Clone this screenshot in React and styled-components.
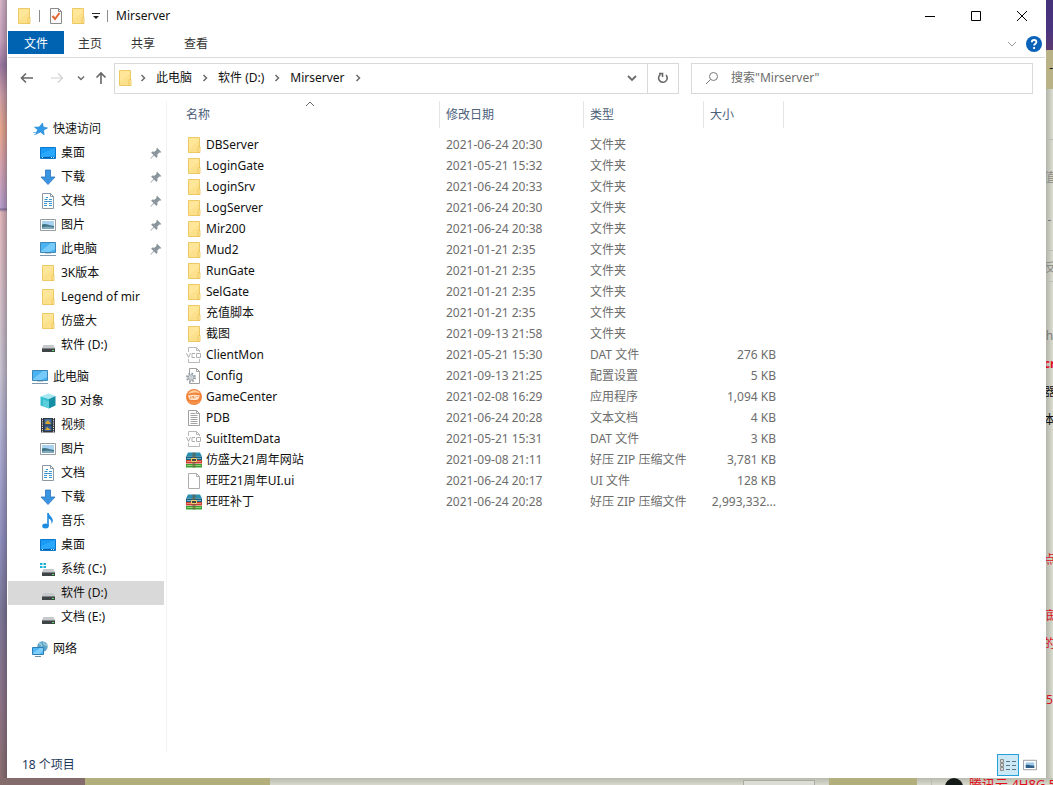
import React from 'react';
import styled, { createGlobalStyle } from 'styled-components';

const GlobalStyle = createGlobalStyle`
    * {
        box-sizing: border-box;
    }

    body {
        margin: 0;
        font-family: "Noto Sans", "Noto Sans CJK SC", sans-serif;
        font-size: 12px;
        line-height: 16px;
        color: #111;
    }

    button, input {
        font: inherit;
        color: inherit;
    }

    svg {
        display: block;
        flex: none;
    }
`;

/* ---------- desktop ---------- */

const Desktop = styled.div`
    display: grid;
    grid-template-columns: 7px minmax(0, 1fr) 7px;
    grid-template-rows: 1fr 7px;
    min-height: 100vh;
    overflow: hidden;
    background: #d6d7cb;
`;

const Wallpaper = styled.div`
    background:
        linear-gradient(90deg, transparent, rgba(60, 50, 70, 0.35)),
        linear-gradient(#d9b9cb 0, #c9a3bd 40px, #9a78a0 65px, #d0a0a8 95px, #eba98c 130px,
            #d9a5b0 165px, #b9a0cf 208px, #7d6c96 209px, #e3b9bd 212px, #d8c0c8 290px,
            #c9c5d2 370px, #b0b0d4 440px, #8f90c0 540px, #7c7898 610px, #8d7488 700px, #8c7070 778px);
`;

const PageEdge = styled.div`
    display: flex;
    flex-direction: column;
    overflow: hidden;
    background: linear-gradient(90deg, #b3b4aa, #dcddd1);
`;

const EdgeBand = styled.div`
    flex: none;
    height: ${props => props.$height};
    background: ${props => props.$fill};
    text-align: right;
    line-height: 36px;
    overflow: hidden;
`;

const EdgeRule = styled.div`
    flex: none;
    height: 1px;
    margin-top: ${props => props.$gap};
    background: #bbbcb3;
`;

const EdgeText = styled.div`
    display: flex;
    flex: none;
    justify-content: center;
    height: 16px;
    margin-top: ${props => props.$gap};
    color: ${props => props.$color};
    font-weight: ${props => props.$bold ? '700' : '400'};
    white-space: nowrap;
`;

const PageBottom = styled.div`
    grid-column: 1 / -1;
    display: flex;
    overflow: hidden;
    background: linear-gradient(#b9baaf, #d9dacd);
`;

const BottomPiece = styled.div`
    flex: none;
    width: ${props => props.$width};
    margin-right: ${props => props.$after || '0'};
    background: ${props => props.$fill};
`;

const BottomBox = styled.div`
    flex: none;
    width: 72px;
    height: 12px;
    margin: 2px 14px 0 auto;
    border: 1px solid #a9aaa2;
    background: #dcddd5;
`;

const Avatar = styled.div`
    flex: none;
    width: 18px;
    height: 18px;
    margin-right: 6px;
    border-radius: 9px;
    background: #141a17;
`;

const BottomText = styled.div`
    flex: none;
    width: 84px;
    overflow: hidden;
    color: #e00f1c;
    font-size: 13px;
    line-height: 12px;
    white-space: nowrap;
`;

/* ---------- window frame ---------- */

const Window = styled.main`
    display: flex;
    flex-direction: column;
    padding: 0 1px;
    background: #fff;
`;

const TitleBar = styled.header`
    display: flex;
    align-items: center;
    gap: 6px;
    height: 31px;
    padding-left: 8px;
`;

const Divider = styled.span`
    width: 1px;
    height: 12px;
    margin: 0 2px 0 1px;
    background: #8c8c8c;
`;

const Title = styled.h1`
    flex: 1;
    margin: 0;
    font-size: 12px;
    font-weight: 400;
`;

const PlainButton = styled.button`
    display: flex;
    align-items: center;
    justify-content: center;
    width: ${props => props.$width};
    height: ${props => props.$height || '31px'};
    padding: 0;
    border: 0;
    background: transparent;
`;

const WindowButtons = styled.div`
    display: flex;
`;

const Ribbon = styled.nav`
    display: flex;
    gap: 1px;
    height: 27px;
    border-bottom: 1px solid #dadbdc;
`;

const Tab = styled.button`
    height: 23px;
    padding: 2px ${props => props.$file ? '16px' : '14px'} 0;
    margin-right: ${props => props.$file ? '-1px' : '0'};
    border: 0;
    background: ${props => props.$file ? '#0063b1' : 'transparent'};
    color: ${props => props.$file ? '#fff' : '#333'};
`;

const RibbonEnd = styled.div`
    display: flex;
    align-items: center;
    gap: 4px;
    margin-left: auto;
    padding-right: 3px;
`;

const AddressRow = styled.div`
    display: flex;
    align-items: center;
    height: 40px;
    padding: 0 12px 0 4px;
`;

const AddressBox = styled.div`
    display: flex;
    align-items: center;
    flex: 1;
    height: 31px;
    margin: 0 12px 0 2px;
    padding-left: 2px;
    border: 1px solid #d9d9d9;
`;

const Crumb = styled.a`
    padding: 0 3px;
    color: #111;
    text-decoration: none;
    white-space: nowrap;
`;

const Separator = styled.span`
    display: flex;
    justify-content: center;
    width: 20px;
`;

const AddressTools = styled.div`
    display: flex;
    height: 29px;
    margin-left: auto;

    button + button {
        border-left: 1px solid #d9d9d9;
    }
`;

const SearchBox = styled.label`
    display: flex;
    align-items: center;
    gap: 12px;
    flex: 0 1 342px;
    height: 31px;
    padding-left: 13px;
    border: 1px solid #d9d9d9;
`;

const SearchInput = styled.input`
    flex: 1;
    min-width: 0;
    padding: 0;
    border: 0;
    outline: 0;
    background: transparent;

    &::placeholder {
        color: #6d6d6d;
        opacity: 1;
    }
`;

/* ---------- navigation pane ---------- */

const Body = styled.div`
    display: flex;
    flex: 1;
    padding-top: 3px;
`;

const Sidebar = styled.nav`
    flex: none;
    width: 159px;
    padding: 16px 2px 0 0;
    border-right: 1px solid #f3f3f3;
`;

const Group = styled.ul`
    margin: 0 0 8px;
    padding: 0;
    list-style: none;
`;

const NavItem = styled.a`
    display: flex;
    align-items: center;
    gap: 5px;
    height: 24px;
    padding: 0 2px 0 ${props => props.$root ? '24px' : '32px'};
    background: ${props => props.$selected ? '#d9d9d9' : 'transparent'};
    color: #111;
    text-decoration: none;
    white-space: nowrap;
`;

const NavLabel = styled.span`
    flex: 1;
`;

/* ---------- file list ---------- */

const Content = styled.section`
    flex: 1;
    padding-left: 13px;
`;

const FileTable = styled.table`
    width: 604px;
    table-layout: fixed;
    border-collapse: separate;
    border-spacing: 0;

    tbody::before {
        content: '';
        display: block;
        height: 6px;
    }
`;

const HeadCell = styled.th`
    position: relative;
    width: ${props => props.$width};
    height: 27px;
    padding: 0 0 0 6px;
    border-right: 1px solid #e5e5e5;
    color: #4c607a;
    font-weight: 400;
    text-align: left;
`;

const SortMark = styled.svg`
    position: absolute;
    top: 0;
    left: calc(50% - 5px);
`;

const Cell = styled.td`
    height: 21px;
    padding: 0 8px 0 6px;
    color: #6d6d6d;
    text-align: ${props => props.$right ? 'right' : 'left'};
    white-space: nowrap;
`;

const FileName = styled.div`
    display: flex;
    align-items: center;
    gap: 4px;
    color: #111;
`;

const StatusBar = styled.footer`
    display: flex;
    align-items: center;
    height: 26px;
    padding: 0 4px 0 14px;
    color: #1e395b;
`;

const ViewButtons = styled.div`
    display: flex;
    margin-left: auto;
`;

const ViewButton = styled.button`
    display: flex;
    align-items: center;
    justify-content: center;
    width: 22px;
    height: 22px;
    padding: 0;
    border: 1px solid ${props => props.$active ? '#26a0da' : 'transparent'};
    background: ${props => props.$active ? '#cbe8f6' : 'transparent'};
`;

/* ---------- icons ---------- */

const Icon = ({ children, size = 16 }) => (
    <svg width={size} height={size} viewBox="0 0 16 16" fill="none" aria-hidden="true">{children}</svg>
);

const Chevron = ({ d, color = '#6b6b6b', width = 1.5 }) => (
    <svg width="10" height="10" viewBox="0 0 10 10" fill="none" stroke={color} strokeWidth={width} aria-hidden="true">
        <path d={d}/>
    </svg>
);

const RIGHT = 'M3.5 2L6.5 5L3.5 8';
const DOWN = 'M1 3L5 7L9 3';

const FolderIcon = () => (
    <Icon>
        <path d="M2.5.5h11v15h-11z" fill="#ffe699" stroke="#ecc962"/>
        <path d="M3 12l10-8v11H3z" fill="#fbdc82" opacity=".6"/>
        <path d="M12.5 9.5h1.500v6h-2v-5z" fill="#ffe9a6" stroke="#e8bf4c" strokeWidth=".8"/>
    </Icon>
);

const CheckDocIcon = () => (
    <Icon>
        <path d="M2.5.5h8l3 3v12h-11z" fill="#fafafa" stroke="#8a8a8a"/>
        <path d="M10.5.5v3h3" stroke="#8a8a8a"/>
        <path d="M4.5 8l2.500 3 4.500-6" stroke="#e0662f" strokeWidth="2"/>
    </Icon>
);

const StarIcon = () => (
    <Icon>
        <path d="M10.5 2l.8 4 4.200.9-4 2.300.6 4.700-3.600-3-4.800 2.400 2-4.600L2.500 6.200l4.700-.2z" fill="#2f9be8" stroke="#1b7fcb" strokeWidth=".6"/>
        <path d="M1 11.500h3M2 13.500h2" stroke="#7cc3f2"/>
    </Icon>
);

const DesktopIcon = () => (
    <Icon>
        <path d="M.5 2.500h15v11H.5z" fill="#1a9bf5" stroke="#0c78cc"/>
        <path d="M1 9l14-6v7.500L1 12z" fill="#36b0ff" opacity=".6"/>
        <path d="M1 12.500h14" stroke="#0a5da8"/>
        <path d="M2 12.500h1M11 12.500h1M13 12.500h1" stroke="#d8efff"/>
    </Icon>
);

const DownloadIcon = () => (
    <Icon>
        <path d="M5.500 1h5v7h4.500L8 15.500 1 8h4.500z" fill="#3b94e0" stroke="#2b76bd" strokeWidth=".8"/>
    </Icon>
);

const DocumentIcon = () => (
    <Icon>
        <path d="M2.500.5h8l3 3v12h-11z" fill="#fff" stroke="#8b98a3"/>
        <path d="M10.500.5v3h3" stroke="#8b98a3"/>
        <path d="M6 4.500h2M4.500 6.500h3M9 6.500h3M4 8.500h8M4 10.500h3M9 10.500h3M4 12.500h3M9 12.500h3" stroke="#3b94d6"/>
    </Icon>
);

const PictureIcon = () => (
    <Icon>
        <path d="M.5 2.500h15v11H.5z" fill="#fff" stroke="#969da3"/>
        <path d="M2 4h12v8H2z" fill="#a9d2ee"/>
        <path d="M2 7.500c3-1.500 6 .5 12 1.500v3H2z" fill="#3f7285"/>
        <path d="M2 10.500c4-1.500 8-1 12 0V12H2z" fill="#7fa9bd"/>
    </Icon>
);

const ComputerIcon = () => (
    <Icon>
        <path d="M.5 1.500h15v10H.5z" fill="#49b3f3" stroke="#3f86b5"/>
        <path d="M1 10L11 2h4v6L9 11H1z" fill="#8ad4fb" opacity=".7"/>
        <path d="M5 12.500h6" stroke="#c0c9cf"/>
        <path d="M0 14.500h16" stroke="#7d99ab"/>
    </Icon>
);

const DriveIcon = ({ system }) => (
    <Icon>
        <path d="M3.500 8h10L15 11H2z" fill="#c5c9cc"/>
        <path d="M2 11h13v4H2z" fill="#3f4446"/>
        <path d="M2 11.500h13" stroke="#7b8184"/>
        <path d="M12 13.500h2" stroke="#4fe05f"/>
        {system && <path d="M0 2h2.500v2H0zM3.500 2H6v2H3.500zM0 5h2.500v2H0zM3.500 5H6v2H3.500z" fill="#18b1d8"/>}
    </Icon>
);

const CubeIcon = () => (
    <Icon>
        <path d="M8.500.5L15.500 3 9 6 .5 3.500z" fill="#a6e9f0"/>
        <path d="M.5 3.500L9 6v9.500L.5 12.500z" fill="#35bfd0"/>
        <path d="M15.500 3v9.500L9 15.500V6z" fill="#168fa5"/>
        <path d="M3 6.500l6 2v7l-6-2.200z" fill="#71dae5" opacity=".6"/>
    </Icon>
);

const VideoIcon = () => (
    <Icon>
        <path d="M1 1h14v14.500H1z" fill="#30343b"/>
        <path d="M2.500 1v14.500M13.500 1v14.500" stroke="#e3e3e3" strokeDasharray="1.200 1"/>
        <path d="M4.500 2h7v5.500h-7z" fill="#4572a8"/>
        <path d="M4.500 8.500h7V14h-7z" fill="#365e97"/>
        <path d="M5 6l3-3 3 4H6zM5 13l2-3 4 3z" fill="#d9a62e"/>
    </Icon>
);

const MusicIcon = () => (
    <Icon>
        <ellipse cx="5.500" cy="13" rx="3.300" ry="2.500" fill="#1d8be0"/>
        <path d="M7.200 0h1.600c.3 3 4 4 4 7.500 0 1.500-.6 2.500-1.300 3.500.4-3-1-4.500-2.700-5.500v7.500H7.200z" fill="#1d8be0"/>
    </Icon>
);

const NetworkIcon = () => (
    <Icon>
        <circle cx="10.500" cy="5.500" r="5.200" fill="#5da5c9"/>
        <path d="M7 2.500c2 0 3 1.500 2.500 3M12 1c-1 2 1 3 3.500 3.500" stroke="#a5cfe0" strokeWidth="1.300"/>
        <path d="M.5 6.500h11v7H.5z" fill="#51b6f4" stroke="#2f7fb5"/>
        <path d="M1 12l7-5h3v3l-4 3H1z" fill="#96d8fb" opacity=".7"/>
        <path d="M3 15.500h6" stroke="#6f8fa3"/>
    </Icon>
);

const VcdIcon = () => (
    <Icon>
        <path d="M2.500 5V.5h8l3 3V5M10.500.5v3h3M2.500 12v3.500h11V12" stroke="#b8b8b8"/>
        <path d="M.5 6l2 4.500 2-4.500M9 6.500H6v4h3M10.500 6.500h4v4h-4z" stroke="#b0b0b0"/>
    </Icon>
);

const ConfigIcon = () => (
    <Icon>
        <path d="M3.500.5h7l3 3v12h-10z" fill="#fff" stroke="#a0a0a0"/>
        <path d="M10.500.5v3h3" stroke="#a0a0a0"/>
        <circle cx="5" cy="9.500" r="4" fill="#fff" stroke="#98a1a8" strokeWidth="2" strokeDasharray="1.700 1.440"/>
        <circle cx="5" cy="9.500" r="2.800" fill="#dfe3e6" stroke="#98a1a8"/>
        <circle cx="5" cy="9.500" r="1" fill="#fff" stroke="#98a1a8" strokeWidth=".6"/>
    </Icon>
);

const GameIcon = () => (
    <Icon>
        <circle cx="8" cy="8" r="8" fill="#f2843a"/>
        <path d="M2 5c2-4.500 9-5.500 12-.5C10 3 6 3.500 2 5z" fill="#ffcf9e"/>
        <path d="M2 6.500c4-1 8-1 12 0-1 1-1 3-2 4-3 .8-6 .8-8.500 0z" fill="#ffe6cc"/>
        <path d="M4.500 7.500v2M6 9.500v-2h1.500v2M9 7.500v2M10.500 7.500h1.500" stroke="#ee8a45" strokeWidth=".8"/>
        <path d="M3 12.500c3 2 7 2 10 0" stroke="#f9a563"/>
    </Icon>
);

const TextIcon = () => (
    <Icon>
        <path d="M2.500.5h8l3 3v12h-11z" fill="#fff" stroke="#a0a0a0"/>
        <path d="M10.500.5v3h3M4.500 3.500h5M4.500 5.500h7M4.500 7.500h7M4.500 9.500h7M4.500 11.500h7M4.500 13.500h7" stroke="#a3a3a3"/>
    </Icon>
);

const BlankIcon = () => (
    <Icon>
        <path d="M2.500.5h8l3 3v12h-11z" fill="#fff" stroke="#adadad"/>
        <path d="M10.500.5v3h3" stroke="#adadad"/>
    </Icon>
);

const ZipIcon = () => (
    <Icon>
        <path d="M2 .5h12l2 4H0z" fill="#2b8fb0"/>
        <path d="M0 4.500h16V8H0z" fill="#1c6180"/>
        <path d="M0 8h16v3.500H0z" fill="#c8402f"/>
        <path d="M0 12h16v3.500H0z" fill="#3f9e35"/>
        <path d="M1 6.500h14" stroke="#8ccbe0" strokeWidth=".8"/>
        <path d="M1 9.500h14" stroke="#f3a08f" strokeWidth=".8"/>
        <path d="M1 13.500h14" stroke="#a5e07d" strokeWidth=".8"/>
        <path d="M6.500.5h3v15h-3z" fill="#6b5a3c" opacity=".6"/>
        <path d="M5.500 6.500h5v3h-5z" fill="#444" stroke="#f3cf6b"/>
    </Icon>
);

const PinIcon = () => (
    <Icon size={12}>
        <path d="M9.500 1L15 6.500l-1.500 1-1-.3-2.700 2.700.2 3L8.500 14.500 5.300 11.300 1 15.500l-.5-.5L4.700 10.700 1.500 7.500 3 6l3 .2L8.800 3.500 8.500 2z" fill="#8b959c"/>
    </Icon>
);

const HelpIcon = () => (
    <Icon>
        <circle cx="8" cy="8" r="8" fill="#0a63b8"/>
        <path d="M5.800 6.200c0-3 4.600-2.800 4.600-.2C10.400 7.700 8.100 7.700 8.100 9.600M8.100 11v2" stroke="#fff" strokeWidth="1.800"/>
    </Icon>
);

const DetailsIcon = () => (
    <Icon>
        <path d="M.5 2.500h3v3h-3zM.5 6.500h3v3h-3zM.5 10.500h3v3h-3z" fill="#fff" stroke="#8d8d8d"/>
        <path d="M6 4.500h4M12 4.500h4M6 8.500h4M12 8.500h4M6 12.500h4M12 12.500h4" stroke="#5f7382"/>
        <path d="M1.500 4h1M1.500 8h1M1.500 12h1" stroke="#555"/>
    </Icon>
);

/* ---------- data ---------- */

const navGroups = [
    {
        label: '快速访问',
        icon: StarIcon,
        items: [
            { label: '桌面', icon: DesktopIcon, pinned: true },
            { label: '下载', icon: DownloadIcon, pinned: true },
            { label: '文档', icon: DocumentIcon, pinned: true },
            { label: '图片', icon: PictureIcon, pinned: true },
            { label: '此电脑', icon: ComputerIcon, pinned: true },
            { label: '3K版本', icon: FolderIcon },
            { label: 'Legend of mir', icon: FolderIcon },
            { label: '仿盛大', icon: FolderIcon },
            { label: '软件 (D:)', icon: DriveIcon },
        ],
    },
    {
        label: '此电脑',
        icon: ComputerIcon,
        items: [
            { label: '3D 对象', icon: CubeIcon },
            { label: '视频', icon: VideoIcon },
            { label: '图片', icon: PictureIcon },
            { label: '文档', icon: DocumentIcon },
            { label: '下载', icon: DownloadIcon },
            { label: '音乐', icon: MusicIcon },
            { label: '桌面', icon: DesktopIcon },
            { label: '系统 (C:)', icon: DriveIcon, system: true },
            { label: '软件 (D:)', icon: DriveIcon, selected: true },
            { label: '文档 (E:)', icon: DriveIcon },
        ],
    },
    { label: '网络', icon: NetworkIcon, items: [] },
];

const files = [
    ['DBServer', '2021-06-24 20:30', '文件夹', '', FolderIcon],
    ['LoginGate', '2021-05-21 15:32', '文件夹', '', FolderIcon],
    ['LoginSrv', '2021-06-24 20:33', '文件夹', '', FolderIcon],
    ['LogServer', '2021-06-24 20:30', '文件夹', '', FolderIcon],
    ['Mir200', '2021-06-24 20:38', '文件夹', '', FolderIcon],
    ['Mud2', '2021-01-21 2:35', '文件夹', '', FolderIcon],
    ['RunGate', '2021-01-21 2:35', '文件夹', '', FolderIcon],
    ['SelGate', '2021-01-21 2:35', '文件夹', '', FolderIcon],
    ['充值脚本', '2021-01-21 2:35', '文件夹', '', FolderIcon],
    ['截图', '2021-09-13 21:58', '文件夹', '', FolderIcon],
    ['ClientMon', '2021-05-21 15:30', 'DAT 文件', '276 KB', VcdIcon],
    ['Config', '2021-09-13 21:25', '配置设置', '5 KB', ConfigIcon],
    ['GameCenter', '2021-02-08 16:29', '应用程序', '1,094 KB', GameIcon],
    ['PDB', '2021-06-24 20:28', '文本文档', '4 KB', TextIcon],
    ['SuitItemData', '2021-05-21 15:31', 'DAT 文件', '3 KB', VcdIcon],
    ['仿盛大21周年网站', '2021-09-08 21:11', '好压 ZIP 压缩文件', '3,781 KB', ZipIcon],
    ['旺旺21周年UI.ui', '2021-06-24 20:17', 'UI 文件', '128 KB', BlankIcon],
    ['旺旺补丁', '2021-06-24 20:28', '好压 ZIP 压缩文件', '2,993,332...', ZipIcon],
];

const crumbs = ['此电脑', '软件 (D:)', 'Mirserver'];

/* ---------- parts ---------- */

const NavEntry = ({ entry, root }) => {
    const EntryIcon = entry.icon;
    return (
        <li>
            <NavItem href="#" $root={root} $selected={entry.selected}>
                <EntryIcon system={entry.system}/>
                <NavLabel>{entry.label}</NavLabel>
                {entry.pinned && <PinIcon/>}
            </NavItem>
        </li>
    );
};

const TopBars = () => (
    <>
        <TitleBar>
            <FolderIcon/>
            <Divider/>
            <CheckDocIcon/>
            <FolderIcon/>
            <PlainButton $width="8px" aria-label="自定义快速访问工具栏">
                <svg width="8" height="8" viewBox="0 0 8 8" aria-hidden="true">
                    <path d="M0 1h8v1H0zM1 4h6L4 7z" fill="#222"/>
                </svg>
            </PlainButton>
            <Divider/>
            <Title>Mirserver</Title>
            <WindowButtons>
                <PlainButton $width="46px" aria-label="最小化">
                    <svg width="10" height="10" stroke="#000"><path d="M0 5.500h10"/></svg>
                </PlainButton>
                <PlainButton $width="46px" aria-label="最大化">
                    <svg width="10" height="10" stroke="#000" fill="none"><path d="M.5.5h9v9h-9z"/></svg>
                </PlainButton>
                <PlainButton $width="46px" aria-label="关闭">
                    <svg width="10" height="10" stroke="#000"><path d="M0 0l10 10M10 0L0 10"/></svg>
                </PlainButton>
            </WindowButtons>
        </TitleBar>
        <Ribbon>
            <Tab $file>文件</Tab>
            <Tab>主页</Tab>
            <Tab>共享</Tab>
            <Tab>查看</Tab>
            <RibbonEnd>
                <PlainButton $width="20px" $height="20px" aria-label="展开功能区">
                    <Chevron d={DOWN} color="#999" width={1}/>
                </PlainButton>
                <PlainButton $width="16px" $height="16px" aria-label="帮助">
                    <HelpIcon/>
                </PlainButton>
            </RibbonEnd>
        </Ribbon>
        <AddressRow>
            <PlainButton $width="30px" aria-label="后退">
                <Icon><path d="M14 8H2.500M7 3.500L2.500 8 7 12.500" stroke="#666" strokeWidth="1.600"/></Icon>
            </PlainButton>
            <PlainButton $width="30px" aria-label="前进">
                <Icon><path d="M2 8h11.500M9 3.500L13.500 8 9 12.500" stroke="#d0d0d0" strokeWidth="1.200"/></Icon>
            </PlainButton>
            <PlainButton $width="18px" aria-label="最近浏览的位置">
                <Chevron d="M2 3.500L5 6.500 8 3.500"/>
            </PlainButton>
            <PlainButton $width="22px" aria-label="向上">
                <Icon><path d="M8 14V3M3.500 7.500L8 3l4.500 4.500" stroke="#666" strokeWidth="1.600"/></Icon>
            </PlainButton>
            <AddressBox>
                <FolderIcon/>
                <Separator><Chevron d={RIGHT}/></Separator>
                {crumbs.map(crumb => (
                    <React.Fragment key={crumb}>
                        <Crumb href="#">{crumb}</Crumb>
                        <Separator><Chevron d={RIGHT}/></Separator>
                    </React.Fragment>
                ))}
                <AddressTools>
                    <PlainButton $width="30px" $height="29px" aria-label="以前的位置">
                        <Chevron d={DOWN} width={1.8}/>
                    </PlainButton>
                    <PlainButton $width="31px" $height="29px" aria-label="刷新">
                        <svg width="14" height="14" viewBox="0 0 14 14" fill="none" stroke="#666" strokeWidth="1.600" aria-hidden="true">
                            <path d="M10 4a4.300 4.300 0 1 1-5.500-.6M3 2.500h3.500V6"/>
                        </svg>
                    </PlainButton>
                </AddressTools>
            </AddressBox>
            <SearchBox>
                <svg width="14" height="14" viewBox="0 0 14 14" fill="none" stroke="#777" aria-hidden="true">
                    <circle cx="8.500" cy="5.500" r="4"/>
                    <path d="M5.500 8.500L1 13"/>
                </svg>
                <SearchInput type="search" aria-label="搜索" placeholder={'搜索"Mirserver"'}/>
            </SearchBox>
        </AddressRow>
    </>
);

const FileList = () => (
    <FileTable>
        <thead>
            <tr>
                <HeadCell $width="260px">
                    名称
                    <SortMark width="10" height="6" fill="none" stroke="#666"><path d="M1 5l4-4 4 4"/></SortMark>
                </HeadCell>
                <HeadCell $width="144px">修改日期</HeadCell>
                <HeadCell $width="120px">类型</HeadCell>
                <HeadCell $width="80px">大小</HeadCell>
            </tr>
        </thead>
        <tbody>
            {files.map(([name, date, type, size, FileIcon]) => (
                <tr key={name}>
                    <Cell>
                        <FileName><FileIcon/>{name}</FileName>
                    </Cell>
                    <Cell>{date}</Cell>
                    <Cell>{type}</Cell>
                    <Cell $right>{size}</Cell>
                </tr>
            ))}
        </tbody>
    </FileTable>
);

export default () => {
    return (
        <Desktop>
            <GlobalStyle/>
            <Wallpaper/>
            <Window>
                <TopBars/>
                <Body>
                    <Sidebar>
                        {navGroups.map(group => (
                            <Group key={group.label}>
                                <NavEntry entry={group} root/>
                                {group.items.map(item => <NavEntry key={item.label} entry={item}/>)}
                            </Group>
                        ))}
                    </Sidebar>
                    <Content>
                        <FileList/>
                    </Content>
                </Body>
                <StatusBar>
                    <span>18 个项目</span>
                    <ViewButtons>
                        <ViewButton $active aria-label="详细信息"><DetailsIcon/></ViewButton>
                        <ViewButton aria-label="大缩略图">
                            <svg width="14" height="12" viewBox="0 1 16 14" fill="none" aria-hidden="true">
                                <path d="M.5 2.500h15v11H.5z" fill="#fff" stroke="#8a8f94"/>
                                <path d="M3 5h10v6H3z" fill="#9cc8ea"/>
                                <path d="M3 8c3-1 6 .5 10 1v2.500H3z" fill="#2f5f86"/>
                            </svg>
                        </ViewButton>
                    </ViewButtons>
                </StatusBar>
            </Window>
            <PageEdge>
                <EdgeBand $height="50px" $fill="linear-gradient(#45307a, #4a3480 30px, #5d3a70)"/>
                <EdgeBand $height="39px" $fill="#b9b286">-</EdgeBand>
                <EdgeRule $gap="50px"/>
                <EdgeText $gap="30px" $color="#8a8a84">值</EdgeText>
                <EdgeText $gap="26px" $color="#777">-</EdgeText>
                <EdgeRule $gap="22px"/>
                <EdgeText $gap="9px" $color="#8a8a84">反</EdgeText>
                <EdgeRule $gap="5px"/>
                <EdgeText $gap="46px" $color="#777">h</EdgeText>
                <EdgeText $gap="12px" $color="#e01020" $bold>cr</EdgeText>
                <EdgeText $gap="12px" $color="#111">器</EdgeText>
                <EdgeText $gap="12px" $color="#111">本</EdgeText>
                <EdgeText $gap="124px" $color="#d8121f">点</EdgeText>
                <EdgeText $gap="40px" $color="#d8121f">底</EdgeText>
                <EdgeText $gap="12px" $color="#d8121f">的</EdgeText>
                <EdgeText $gap="40px" $color="#d8121f">5</EdgeText>
            </PageEdge>
            <PageBottom>
                <BottomPiece $width="85px" $fill="#856c6c"/>
                <BottomPiece $width="185px" $fill="#b3af7d"/>
                <BottomBox/>
                <BottomPiece $width="88px" $after="14px" $fill="#b3af7d"/>
                <BottomPiece $width="1px" $after="13px" $fill="#bcbdb2"/>
                <Avatar/>
                <BottomText>腾讯云 4H8G 5</BottomText>
            </PageBottom>
        </Desktop>
    );
};
